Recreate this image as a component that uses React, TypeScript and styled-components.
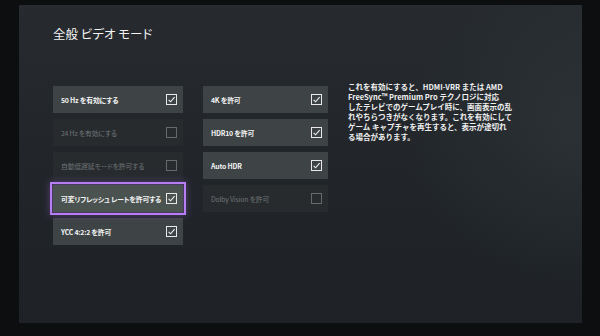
import React from "react";
import styled, { createGlobalStyle, css } from "styled-components";

const Global = createGlobalStyle`
  html, body { margin: 0; padding: 0; background: #0d0e0f; }
  body { width: 600px; height: 336px; overflow: hidden;
    font-family: "Noto Sans CJK JP", "Noto Sans", sans-serif; }
`;

const Frame = styled.div`
  width: 600px;
  height: 336px;
  padding: 5px 18px 13px 19px;
  box-sizing: border-box;
  background: #0d0e0f;
`;

const Screen = styled.div`
  width: 100%;
  height: 100%;
  box-sizing: border-box;
  padding: 19px 0 0 34px;
  background:
    radial-gradient(ellipse 45% 70% at 100% 40%, rgba(60, 72, 76, 0.3), rgba(0,0,0,0) 70%),
    linear-gradient(180deg, #272b2f 0%, #22262a 45%, #1e2226 100%);
  display: flex;
  flex-direction: column;
`;

const Title = styled.h1`
  margin: 0;
  font-size: 12.5px;
  font-weight: 400;
  color: #f2f2f2;
  line-height: 19px;
  font-feature-settings: "palt";
`;

const Columns = styled.div`
  margin-top: 43px;
  display: grid;
  grid-template-columns: 130px 125px 190px;
  column-gap: 20px;
  align-items: start;
`;

const Column = styled.div`
  display: flex;
  flex-direction: column;
  gap: 6px;
`;

const Tile = styled.div<{ $state: "on" | "off" | "focus" }>`
  height: 27px;
  box-sizing: border-box;
  display: flex;
  align-items: center;
  justify-content: space-between;
  padding: 0 6px 0 8px;
  font-size: 6.9px;
  font-weight: 700;
  letter-spacing: -0.2px;
  font-feature-settings: "palt";
  white-space: nowrap;
  background: #3e4446;
  color: #f4f4f4;
  ${(p) =>
    p.$state === "off" &&
    css`
      background: #272b2e;
      color: #6e7376;
      font-weight: 400;
    `}
  ${(p) =>
    p.$state === "focus" &&
    css`
      background: #4b5351;
      outline: 2px solid #b67ef2;
      outline-offset: 1px;
      box-shadow: 0 0 7px 3px rgba(170, 110, 240, 0.4);
      position: relative;
      z-index: 1;
    `}
`;

const Box = styled.svg`
  width: 11px;
  height: 11px;
  flex: none;
`;

const Check = ({ checked, dim }: { checked: boolean; dim?: boolean }) => (
  <Box viewBox="0 0 11 11">
    <rect x="0.5" y="0.5" width="10" height="10" fill="none" stroke={dim ? "#66696c" : "#e8e8e8"} strokeWidth="1" />
    {checked && (
      <polyline points="2.6,5.8 4.6,7.8 8.6,3.2" fill="none" stroke="#f2f2f2" strokeWidth="1.1" />
    )}
  </Box>
);

const Description = styled.div`
  margin-top: -4px;
  font-size: 7.5px;
  line-height: 10px;
  font-weight: 700;
  color: #f0f0f0;
  white-space: nowrap;
`;

type Item = { label: string; state: "on" | "off" | "focus"; checked: boolean };

const left: Item[] = [
  { label: "50 Hz を有効にする", state: "on", checked: true },
  { label: "24 Hz を有効にする", state: "off", checked: false },
  { label: "自動低遅延モードを許可する", state: "off", checked: false },
  { label: "可変リフレッシュ レートを許可する", state: "focus", checked: true },
  { label: "YCC 4:2:2 を許可", state: "on", checked: true },
];

const right: Item[] = [
  { label: "4K を許可", state: "on", checked: true },
  { label: "HDR10 を許可", state: "on", checked: true },
  { label: "Auto HDR", state: "on", checked: true },
  { label: "Dolby Vision を許可", state: "off", checked: false },
];

const lines = [
  "これを有効にすると、HDMI-VRR または AMD",
  "FreeSync™ Premium Pro テクノロジに対応",
  "したテレビでのゲームプレイ時に、画面表示の乱",
  "れやちらつきがなくなります。これを有効にして",
  "ゲーム キャプチャを再生すると、表示が途切れ",
  "る場合があります。",
];

const renderCol = (items: Item[]) => (
  <Column>
    {items.map((it) => (
      <Tile key={it.label} $state={it.state}>
        <span>{it.label}</span>
        <Check checked={it.checked} dim={it.state === "off"} />
      </Tile>
    ))}
  </Column>
);

export default function App() {
  return (
    <>
      <Global />
      <Frame>
        <Screen>
          <Title>全般 ビデオ モード</Title>
          <Columns>
            {renderCol(left)}
            {renderCol(right)}
            <Description>
              {lines.map((l) => (
                <div key={l}>{l}</div>
              ))}
            </Description>
          </Columns>
        </Screen>
      </Frame>
    </>
  );
}
